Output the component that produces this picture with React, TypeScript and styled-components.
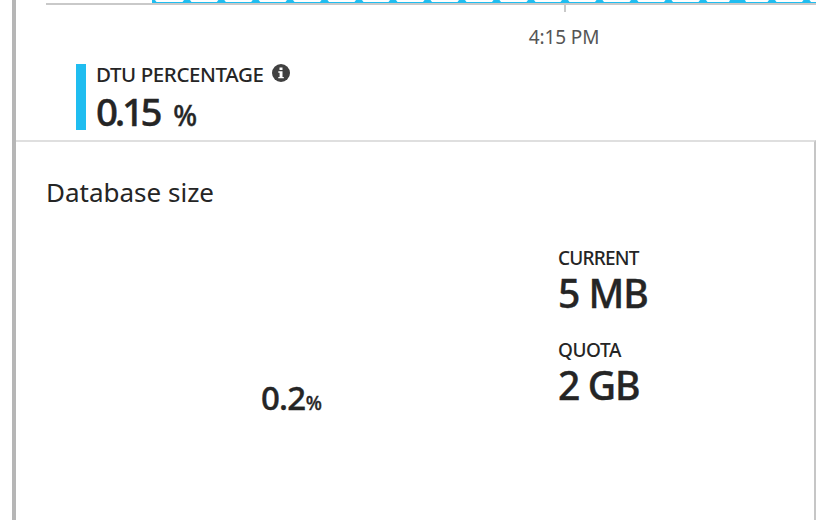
import React from 'react';
import styled, { createGlobalStyle } from 'styled-components';

const GlobalStyle = createGlobalStyle`
  * { box-sizing: border-box; }
  body {
    margin: 0;
    background: #fff;
    color: #252525;
    font-family: 'Noto Sans', 'Open Sans', sans-serif;
    overflow: hidden;
  }
`;

const Blade = styled.main`
  width: 804px;
  height: 520px;
  margin-left: 12px;
  border-left: 4px solid #b6b6b6;
  display: flex;
  flex-direction: column;
`;

const MonitorTile = styled.section`
  height: 140px;
  flex: none;
  padding-left: 30px;
`;

const Chart = styled.svg`
  display: block;
  width: 770px;
  height: 12px;
`;

const AxisLabel = styled.div`
  width: 80px;
  height: 26px;
  margin: 12px 0 14px 478px;
  line-height: 26px;
  text-align: center;
  white-space: nowrap;
  font-size: 19px;
  letter-spacing: -0.1px;
  color: #555;
`;

const Legend = styled.div`
  height: 66px;
  margin-left: 30px;
  padding-left: 10px;
  border-left: 10px solid #20bdf0;
`;

const LegendTitle = styled.div`
  display: flex;
  align-items: center;
  height: 20px;
  gap: 9px;
`;

const Label = styled.span<{ $size: number; $spacing: number }>`
  display: block;
  line-height: 24px;
  white-space: nowrap;
  font-weight: 500;
  font-size: ${(p) => p.$size}px;
  letter-spacing: ${(p) => p.$spacing}px;
`;

const InfoIcon = styled.svg`
  width: 18px;
  height: 18px;
  flex: none;
  margin-top: -2px;
`;

const Value = styled.div<{ $size: number; $spacing: number; $line: number }>`
  white-space: nowrap;
  font-weight: 500;
  font-size: ${(p) => p.$size}px;
  letter-spacing: ${(p) => p.$spacing}px;
  line-height: ${(p) => p.$line}px;
  -webkit-text-stroke: 0.4px currentColor;
`;

const Unit = styled.span<{ $size: number; $gap: number }>`
  font-size: ${(p) => p.$size}px;
  margin-left: ${(p) => p.$gap}px;
  letter-spacing: 0;
`;

const SizeTile = styled.section`
  flex: 1;
  border-top: 2px solid #dfdfdf;
  border-right: 2px solid #c6c6c6;
  padding: 32px 0 0 30px;
`;

const Heading = styled.h2`
  margin: 0;
  font-weight: 400;
  font-size: 26px;
  line-height: 36px;
  letter-spacing: 0;
`;

const SizeBody = styled.div`
  display: grid;
  grid-template-columns: 512px 1fr;
`;

const Gauge = styled.div`
  padding: 166px 0 0 215px;
`;

const Stats = styled.div`
  padding-top: 36px;
  display: flex;
  flex-direction: column;
  gap: 20px;
`;

const Stat = styled.div`
  height: 72px;
`;

const points = [187, 221.3, 255.7, 290, 324.5, 359, 393, 427.5, 462, 496.5, 531, 565, 599.5, 634, 668.5, 703, 772, 806.5];

export default function App() {
  return (
    <>
      <GlobalStyle />
      <Blade>
        <MonitorTile>
          <Chart viewBox="46 0 770 12">
            <rect x="46" y="3" width="770" height="2" fill="#c9c9c9" />
            <rect x="564" y="5" width="2" height="7" fill="#c9c9c9" />
            <g fill="#20bdf0">
              <rect x="152" y="2" width="664" height="1" />
              <path d="M152 0H155L156.5 2H152Z" />
              {points.map((x) => (
                <path key={x} d={`M${x - 3} 0H${x + 3}L${x + 4.5} 2H${x - 4.5}Z`} />
              ))}
              <path d="M730 0H745L746 2H729Z" />
            </g>
          </Chart>
          <AxisLabel>4:15 PM</AxisLabel>
          <Legend>
            <LegendTitle>
              <Label $size={20.5} $spacing={-0.4}>DTU PERCENTAGE</Label>
              <InfoIcon viewBox="0 0 18 18">
                <circle cx="9" cy="9" r="9" fill="#404040" />
                <path d="M7.5 3.5h3v2.6h-3zM6.3 7.3h4.2v5.6h1.3v1.4H6.3v-1.4h1.3V8.7H6.3z" fill="#fff" />
              </InfoIcon>
            </LegendTitle>
            <Value $size={38.5} $spacing={-3.3} $line={54}>
              0.15<Unit $size={28} $gap={14}>%</Unit>
            </Value>
          </Legend>
        </MonitorTile>
        <SizeTile>
          <Heading>Database size</Heading>
          <SizeBody>
            <Gauge>
              <Value $size={33} $spacing={-0.8} $line={44}>
                0.2<Unit $size={19} $gap={0.5}>%</Unit>
              </Value>
            </Gauge>
            <Stats>
              <Stat>
                <Label $size={19} $spacing={-0.8}>CURRENT</Label>
                <Value $size={39} $spacing={-1} $line={46}>5 MB</Value>
              </Stat>
              <Stat>
                <Label $size={19} $spacing={-0.4}>QUOTA</Label>
                <Value $size={39} $spacing={-1.3} $line={46}>2 GB</Value>
              </Stat>
            </Stats>
          </SizeBody>
        </SizeTile>
      </Blade>
    </>
  );
}
